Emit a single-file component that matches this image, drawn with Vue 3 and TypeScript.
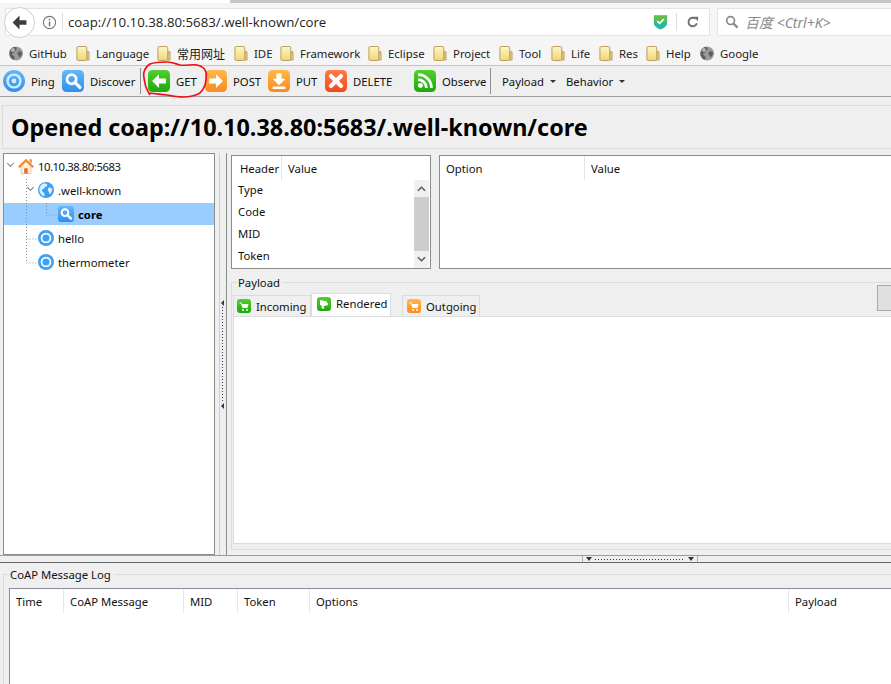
<script setup lang="ts">
const bookmarks = [
  { icon: 'world', label: 'GitHub', w: 38 },
  { icon: 'folder', label: 'Language', w: 52 },
  { icon: 'folder', label: '常用网址', w: 48, cjk: true },
  { icon: 'folder', label: 'IDE', w: 17 },
  { icon: 'folder', label: 'Framework', w: 59 },
  { icon: 'folder', label: 'Eclipse', w: 36 },
  { icon: 'folder', label: 'Project', w: 37 },
  { icon: 'folder', label: 'Tool', w: 23 },
  { icon: 'folder', label: 'Life', w: 19 },
  { icon: 'folder', label: 'Res', w: 18 },
  { icon: 'folder', label: 'Help', w: 25 },
  { icon: 'world', label: 'Google', w: 38 }
]

const logColumns = [
  { label: 'Time', w: 54 },
  { label: 'CoAP Message', w: 120 },
  { label: 'MID', w: 54 },
  { label: 'Token', w: 72 },
  { label: 'Options', w: 479 },
  { label: 'Payload', w: 120 }
]

const headerRows = ['Type', 'Code', 'MID', 'Token']
</script>

<template>
  <div class="page">
    <svg class="sprite" width="0" height="0">
      <defs>
        <linearGradient id="gBlue" x1="0" y1="0" x2="0" y2="1"><stop offset="0" stop-color="#63b8f7" /><stop offset="1" stop-color="#2f8fee" /></linearGradient>
        <linearGradient id="gGreen" x1="0" y1="0" x2="0" y2="1"><stop offset="0" stop-color="#4fd02c" /><stop offset="1" stop-color="#1fa80c" /></linearGradient>
        <linearGradient id="gOrange" x1="0" y1="0" x2="0" y2="1"><stop offset="0" stop-color="#ffb84a" /><stop offset="1" stop-color="#fb8a1e" /></linearGradient>
        <linearGradient id="gRed" x1="0" y1="0" x2="0" y2="1"><stop offset="0" stop-color="#ff7a45" /><stop offset="1" stop-color="#f5481c" /></linearGradient>
        <linearGradient id="gFolder" x1="0" y1="0" x2="0" y2="1"><stop offset="0" stop-color="#fdf6c4" /><stop offset="1" stop-color="#f0d678" /></linearGradient>
        <symbol id="ping" viewBox="0 0 24 24"><circle cx="12" cy="12" r="12" fill="url(#gBlue)" /><circle cx="12" cy="12" r="7" fill="none" stroke="#d4eaff" stroke-width="2.6" /><circle cx="12" cy="12" r="2.6" fill="#d4eaff" /></symbol>
        <symbol id="discover" viewBox="0 0 24 24"><rect width="24" height="24" rx="5" fill="url(#gBlue)" /><circle cx="10.5" cy="10" r="5" fill="none" stroke="#fff" stroke-width="3" /><path d="M14 13.5l5.5 5.5" stroke="#fff" stroke-width="3.6" stroke-linecap="round" /></symbol>
        <symbol id="get" viewBox="0 0 24 24"><rect width="24" height="24" rx="5" fill="url(#gGreen)" /><path d="M12 4.5L4.5 12l7.500 7.500v-4.700h7.500v-5.600h-7.500z" fill="#fff" /></symbol>
        <symbol id="post" viewBox="0 0 24 24"><rect width="24" height="24" rx="5" fill="url(#gOrange)" /><path d="M12 4.500l7.500 7.500-7.500 7.500v-4.700h-7.500v-5.600h7.500z" fill="#fff" /></symbol>
        <symbol id="put" viewBox="0 0 24 24"><rect width="24" height="24" rx="5" fill="url(#gOrange)" /><path d="M9.200 3.500h5.600v6h4.200l-7 7-7-7h4.200zM5 18h14v2.800H5z" fill="#fff" /></symbol>
        <symbol id="del" viewBox="0 0 24 24"><rect width="24" height="24" rx="5" fill="url(#gRed)" /><path d="M6.500 6.500l11 11M17.500 6.500l-11 11" stroke="#fff" stroke-width="4.400" stroke-linecap="round" /></symbol>
        <symbol id="rss" viewBox="0 0 24 24"><rect width="24" height="24" rx="5" fill="url(#gGreen)" /><circle cx="7" cy="17" r="2.700" fill="#fff" /><path d="M4.500 10.500a9 9 0 0 1 9 9M4.500 5a14.500 14.500 0 0 1 14.500 14.500" fill="none" stroke="#fff" stroke-width="3" /></symbol>
        <symbol id="home" viewBox="0 0 18 18"><path d="M3.500 9v8.500h11V9L9 4z" fill="#fff2e2" stroke="#f0b070" stroke-width=".8" /><path d="M7 17.500v-6h4v6z" fill="#f26a1e" /><path d="M0 9.500L9 .8l9 8.700-1.800 1.700L9 4.200 1.800 11.200z" fill="#f58a2a" /><path d="M13 1.500h2.500v5L13 4z" fill="#f58a2a" /></symbol>
        <symbol id="globe" viewBox="0 0 18 18"><circle cx="9" cy="9" r="9" fill="#3d9ff2" /><path d="M7 1.500c2 .5 4 1 3.500 2.500S8 5 7.500 6.500s-3 1-3 3 2.500 2 3 4-1 2.500-1.500 2.500C2 14 .8 9 2 6c1-2.500 3-4 5-4.500zM12 6.500c1.500-1 3.500 0 4 1.500s-1 3-1.500 4.500-2 1-2-.5-1.800-1.500-1.500-3 0-1.500 1-2.500z" fill="#dcefff" /></symbol>
        <symbol id="res" viewBox="0 0 18 18"><circle cx="9" cy="9" r="9" fill="#3ea2f2" /><circle cx="9" cy="9" r="6" fill="#fff" /><circle cx="9" cy="9" r="4" fill="#3ea2f2" /></symbol>
        <symbol id="folder" viewBox="0 0 14 16"><path d="M11 6h2.500v9H11z" fill="#e5cd80" stroke="#b59a55" stroke-width=".8" /><rect x=".5" y=".5" width="10.500" height="15" rx="1.500" fill="url(#gFolder)" stroke="#b59a55" /></symbol>
        <symbol id="world" viewBox="0 0 14 14"><circle cx="7" cy="7" r="7" fill="#9a9a9a" /><path d="M5 .6C7 1 8 1.500 7.500 3S6 4 5.500 5.500 3 6 3 7.500s2 1.500 2.500 3S5 13 4 13C1 11.500 0 8 1 5S3.500 1 5 .6zM9.500 5c1.200-.8 3 0 3.500 1.500s-1 2.500-1.500 3.500-1.800.8-1.800-.4-1.500-1.200-1.200-2.500.1-1.300 1-2.100z" fill="#5e5e5e" /><circle cx="4" cy="3.500" r="2" fill="#d8d8d8" opacity=".7" /></symbol>
        <symbol id="cartG" viewBox="0 0 14 14"><rect width="14" height="14" rx="3" fill="url(#gGreen)" /><path d="M2.500 3.500h2l.5 1.500h6.500l-1 4H5.500L4 4.500H2.500z" fill="#fff" /><circle cx="6" cy="11" r="1" fill="#fff" /><circle cx="10" cy="11" r="1" fill="#fff" /></symbol>
        <symbol id="cartO" viewBox="0 0 14 14"><rect width="14" height="14" rx="3" fill="url(#gOrange)" /><path d="M2.500 3.500h2l.5 1.500h6.500l-1 4H5.500L4 4.500H2.500z" fill="#fff" /><circle cx="6" cy="11" r="1" fill="#fff" /><circle cx="10" cy="11" r="1" fill="#fff" /></symbol>
        <symbol id="screen" viewBox="0 0 14 14"><rect width="14" height="14" rx="3" fill="url(#gGreen)" /><path d="M3 3l7 1.500v4L6.500 9l1 2.500H4.500l.3-2.700L3 8z" fill="#fff" /><path d="M10 5.500l1.500 1.500-1.500 1.500z" fill="#fff" /></symbol>
      </defs>
    </svg>

    <header class="browser">
      <div class="tabtop"><div class="tabfill"></div></div>
      <div class="address">
        <div class="urlbar">
          <svg class="info" viewBox="0 0 16 16"><circle cx="8" cy="8" r="6.500" fill="none" stroke="#777" stroke-width="1.200" /><path d="M7.200 4h1.600v1.600H7.200zM7.200 7h1.600v5H7.200z" fill="#777" /></svg>
          <span class="urlsep"></span>
          <span class="urltext">coap://10.10.38.80:5683/.well-known/core</span>
          <svg class="shield" viewBox="0 0 16 17"><path d="M1 1.500h14v8.500c0 2.500-3.500 5-7 6.500-3.500-1.500-7-4-7-6.500z" fill="#2db7a0" /><path d="M1 1.500h14v6.500H1z" fill="#62bd4f" /><path d="M4.500 7.500l2.500 2.500 4.500-4.500" fill="none" stroke="#fff" stroke-width="1.700" /></svg>
          <span class="urlsep"></span>
          <svg class="reload" viewBox="0 0 14 14"><path d="M11.500 8.500A5 5 0 1 1 10 3.200" fill="none" stroke="#6e6e6e" stroke-width="2.200" /><path d="M8 .8l5 .2-.2 5z" fill="#6e6e6e" /></svg>
        </div>
        <div class="search">
          <svg class="lens" viewBox="0 0 15 15"><circle cx="6" cy="6" r="4.200" fill="none" stroke="#8a8a8a" stroke-width="1.800" /><path d="M9.200 9.200l4.300 4.300" stroke="#8a8a8a" stroke-width="2.400" /></svg>
          <span class="placeholder">百度 &lt;Ctrl+K&gt;</span>
        </div>
        <button class="back">
          <svg viewBox="0 0 16 16"><path d="M8 1.500L1.500 8 8 14.500v-4.300h6.500V5.800H8z" fill="#3d3d3d" /></svg>
        </button>
      </div>
      <nav class="bookmarks">
        <div v-for="b in bookmarks" :key="b.label" class="bookmark" :class="{ cjk: b.cjk }">
          <svg class="bm-ico"><use :href="'#' + b.icon" /></svg>
          <span :style="{ width: b.w + 'px' }">{{ b.label }}</span>
        </div>
      </nav>
    </header>

    <div class="toolbar">
      <div class="tool t-ping"><svg class="tool-ico"><use href="#ping" /></svg><span>Ping</span></div>
      <div class="tool t-discover"><svg class="tool-ico"><use href="#discover" /></svg><span>Discover</span></div>
      <i class="tool-sep"></i>
      <div class="tool t-get"><svg class="tool-ico"><use href="#get" /></svg><span>GET</span></div>
      <div class="tool t-post"><svg class="tool-ico"><use href="#post" /></svg><span>POST</span></div>
      <div class="tool t-put"><svg class="tool-ico"><use href="#put" /></svg><span>PUT</span></div>
      <div class="tool t-del"><svg class="tool-ico"><use href="#del" /></svg><span>DELETE</span></div>
      <div class="tool t-obs"><svg class="tool-ico"><use href="#rss" /></svg><span>Observe</span></div>
      <i class="tool-sep"></i>
      <div class="menu m-payload">Payload<i class="caret"></i></div>
      <div class="menu m-behavior">Behavior<i class="caret"></i></div>
      <svg class="scribble" viewBox="0 0 70 42"><path d="M10 37C7 32 5 28 5 25 4 21 3 17 4 14 5 10 7 8 10 6 15 4 21 4 27 4 32 4 36 6 40 7 46 8 52 6 57 7 62 8 65 11 66 14 67 18 66 23 65 27 64 30 62 33 60 35 55 38 49 39 43 39 37 39 32 38 27 37 21 36 15 36 10 35" fill="none" stroke="#ec1018" stroke-width="1.700" /></svg>
    </div>

    <h1 class="title">Opened coap://10.10.38.80:5683/.well-known/core</h1>

    <main class="workspace">
      <aside class="tree">
        <svg class="tree-lines" width="100" height="130"><path d="M22.500 25v84M22.500 85h10M22.500 109h10M42.500 49v12M42.500 61h11" fill="none" stroke="#8c8c8c" stroke-dasharray="1 2" /></svg>
        <div class="node lvl0"><i class="chev"></i><svg class="node-ico"><use href="#home" /></svg><span class="host">10.10.38.80:5683</span></div>
        <div class="node lvl1"><i class="chev"></i><svg class="node-ico"><use href="#globe" /></svg><span>.well-known</span></div>
        <div class="node lvl2 selected"><svg class="node-ico"><use href="#discover" /></svg><span>core</span></div>
        <div class="node lvl1"><svg class="node-ico"><use href="#res" /></svg><span>hello</span></div>
        <div class="node lvl1"><svg class="node-ico"><use href="#res" /></svg><span>thermometer</span></div>
      </aside>

      <div class="vsplit">
        <i class="tri-left"></i>
        <i class="vdots"></i>
        <i class="tri-left"></i>
      </div>

      <section class="detail">
        <div class="tables">
          <div class="table header-table">
            <div class="thead">
              <span class="th th-header">Header</span>
              <span class="th">Value</span>
            </div>
            <div class="tbody">
              <div class="rows">
                <div v-for="r in headerRows" :key="r" class="row">{{ r }}</div>
              </div>
              <div class="scrollbar">
                <svg class="sb-arrow" viewBox="0 0 10 6"><path d="M1 5l4-4 4 4" fill="none" stroke="#555" stroke-width="1.500" /></svg>
                <div class="sb-thumb"></div>
                <svg class="sb-arrow" viewBox="0 0 10 6"><path d="M1 1l4 4 4-4" fill="none" stroke="#555" stroke-width="1.500" /></svg>
              </div>
            </div>
          </div>
          <div class="table option-table">
            <div class="thead">
              <span class="th th-option">Option</span>
              <span class="th">Value</span>
            </div>
          </div>
        </div>

        <fieldset class="payload">
          <legend>Payload</legend>
          <div class="tabs">
            <div class="tab"><svg class="tab-ico"><use href="#cartG" /></svg>Incoming</div>
            <div class="tab active"><svg class="tab-ico"><use href="#screen" /></svg>Rendered</div>
            <div class="tab outgoing"><svg class="tab-ico"><use href="#cartO" /></svg>Outgoing</div>
            <div class="tab-button"></div>
          </div>
          <div class="pane"></div>
        </fieldset>
      </section>
    </main>

    <div class="hsplit">
      <div class="handle">
        <i class="tri-down"></i>
        <i class="hdots"></i>
        <i class="tri-down"></i>
      </div>
    </div>

    <section class="bottom">
      <fieldset class="log">
        <legend>CoAP Message Log</legend>
        <div class="log-table">
          <div class="log-head">
            <span v-for="c in logColumns" :key="c.label" class="log-th" :style="{ width: c.w + 'px' }">{{ c.label }}</span>
          </div>
        </div>
      </fieldset>
    </section>
  </div>
</template>

<style>
html,
body {
  margin: 0;
  background: #efefef;
}
</style>

<style scoped>
.page {
  position: relative;
  width: 891px;
  height: 684px;
  overflow: hidden;
  background: #efefef;
  color: #111;
  font: 11.3px 'Noto Sans', 'Noto Sans CJK SC', sans-serif;
  display: flex;
  flex-direction: column;
}

.sprite {
  position: absolute;
}

.browser {
  background: #f5f5f5;
  height: 66px;
  flex: none;
  box-sizing: border-box;
  border-bottom: 1px solid #c4c4c4;
}

.tabtop {
  height: 3px;
  background: #fff;
  padding-left: 230px;
  margin-bottom: 5px;
}

.tabfill {
  height: 3px;
  background: #c6c6c6;
}

.address {
  position: relative;
  display: flex;
  height: 28px;
  padding-left: 5px;
  box-sizing: border-box;
}

.urlbar {
  width: 705px;
  box-sizing: border-box;
  background: #fff;
  border: 1px solid #e4e4e4;
  display: flex;
  align-items: center;
  padding-left: 36px;
}

.info {
  width: 15px;
  height: 15px;
  flex: none;
}

.urlsep {
  width: 1px;
  height: 18px;
  background: #ddd;
  flex: none;
  margin-left: 5px;
}

.urltext {
  margin-left: 5px;
  font: 13.250px 'Open Sans', sans-serif;
  color: #222;
  width: 575px;
  flex: none;
  white-space: nowrap;
}

.shield {
  width: 15px;
  height: 16px;
  flex: none;
  margin-right: 3px;
  margin-left: 10px;
}

.reload {
  width: 12px;
  height: 12px;
  margin-left: 10px;
  flex: none;
}

.search {
  flex: 1;
  margin-left: 7px;
  background: #fff;
  border: 1px solid #e4e4e4;
  border-right: 0;
  display: flex;
  align-items: center;
  padding-left: 7px;
}

.lens {
  width: 14px;
  height: 14px;
}

.placeholder {
  margin-left: 6px;
  color: #8a8a8a;
  font-style: italic;
  font-size: 14px;
  white-space: nowrap;
}

.back {
  position: absolute;
  left: 4px;
  top: -1px;
  width: 31px;
  height: 31px;
  padding: 0;
  border: 1px solid #cfcfcf;
  border-radius: 50%;
  background: #fff;
  display: flex;
  align-items: center;
  justify-content: center;
}

.back svg {
  width: 17px;
  height: 17px;
}

.bookmarks {
  display: flex;
  align-items: center;
  gap: 9px;
  height: 21px;
  margin-top: 7px;
  padding-left: 9px;
}

.bookmark {
  display: flex;
  align-items: center;
  gap: 6px;
  white-space: nowrap;
  font-size: 11.400px;
  color: #222;
}

.cjk {
  font-size: 12px;
}

.bm-ico {
  width: 14px;
  height: 15px;
  flex: none;
}

.toolbar {
  position: relative;
  display: flex;
  align-items: center;
  flex: none;
  height: 31px;
  box-sizing: border-box;
  border-bottom: 1px solid #a0a0a0;
  padding-left: 3px;
  background: #efefef;
}

.tool {
  display: flex;
  align-items: center;
  gap: 6px;
  white-space: nowrap;
}

.tool-ico {
  width: 22px;
  height: 22px;
  flex: none;
}

.t-ping {
  width: 59px;
}

.t-discover {
  width: 78px;
}

.tool-sep {
  width: 1px;
  height: 26px;
  background: #8f8f8f;
}

.t-get {
  margin-left: 7px;
  width: 57px;
}

.t-post {
  width: 63px;
}

.t-put {
  width: 57px;
}

.t-del {
  width: 89px;
}

.t-obs {
  width: 76px;
}

.menu {
  white-space: nowrap;
  display: flex;
  align-items: center;
}

.m-payload {
  margin-left: 11px;
  width: 64px;
}

.caret {
  width: 0;
  height: 0;
  border: 3px solid transparent;
  border-top-color: #333;
  border-bottom: 0;
  margin-left: 6px;
}

.scribble {
  position: absolute;
  left: 140px;
  top: -8px;
  width: 70px;
  height: 42px;
}

.title {
  flex: none;
  box-sizing: border-box;
  height: 44px;
  margin: 8px 0 4px 2px;
  padding-left: 8px;
  border: solid #dcdcdc;
  border-width: 1px 0 1px 1px;
  font-size: 23.400px;
  line-height: 42px;
  font-weight: 700;
  color: #000;
  white-space: nowrap;
}

.workspace {
  display: flex;
  flex: none;
  height: 402px;
  padding-left: 3px;
}

.tree {
  position: relative;
  width: 212px;
  box-sizing: border-box;
  flex: none;
  background: #fff;
  border: 1px solid #8c8c8c;
  padding-top: 1px;
}

.tree-lines {
  position: absolute;
  left: 0;
  top: 0;
  z-index: 1;
}

.node {
  position: relative;
  display: flex;
  align-items: center;
  height: 22px;
  margin-bottom: 2px;
  white-space: nowrap;
}

.lvl0 {
  padding-left: 14px;
}

.lvl1 {
  padding-left: 34px;
}

.lvl2 {
  padding-left: 54px;
}

.host {
  letter-spacing: -0.45px;
}

.chev {
  position: absolute;
  top: 6px;
  width: 4px;
  height: 4px;
  border: solid #808080;
  border-width: 0 1.5px 1.5px 0;
  transform: rotate(45deg);
  margin-left: -10px;
}

.node-ico {
  position: relative;
  z-index: 2;
  width: 16px;
  height: 16px;
  margin-right: 4px;
  flex: none;
}

.selected {
  background: #99ccff;
  font-weight: 700;
  color: #000;
}

.vsplit {
  position: relative;
  width: 12px;
  flex: none;
  box-sizing: border-box;
  border-right: 1px solid #8c8c8c;
  background: linear-gradient(90deg, #efefef 4px, #cfcfcf 4px, #cfcfcf 5px, #efefef 5px);
  display: flex;
  flex-direction: column;
  align-items: center;
  padding-top: 147px;
}

.tri-left {
  width: 0;
  height: 0;
  border: 3px solid transparent;
  border-right: 3px solid #33335a;
  border-left: 0;
  margin-left: 3px;
}

.vdots {
  width: 1px;
  height: 95px;
  margin: 1px 0 1px 3px;
  background: repeating-linear-gradient(180deg, #33335a 0 1px, transparent 1px 3px);
}

.detail {
  flex: 1;
  min-width: 0;
  padding: 2px 0 0 4px;
}

.tables {
  display: flex;
  gap: 8px;
  height: 114px;
}

.table {
  background: #fff;
  box-sizing: border-box;
  border: 1px solid #8c8c8c;
  flex: none;
}

.header-table {
  width: 200px;
}

.option-table {
  width: 500px;
}

.thead {
  display: flex;
  height: 24px;
  align-items: flex-start;
}

.th {
  padding-left: 6px;
  line-height: 26px;
  white-space: nowrap;
}

.th-header {
  width: 50px;
  height: 24px;
  box-sizing: border-box;
  padding-left: 8px;
  border-right: 1px solid #e6e6e6;
}

.th-option {
  width: 145px;
  height: 24px;
  box-sizing: border-box;
  border-right: 1px solid #e6e6e6;
}

.tbody {
  display: flex;
  height: 88px;
}

.rows {
  flex: 1;
  padding-left: 6px;
}

.row {
  height: 22px;
  line-height: 20px;
}

.scrollbar {
  width: 15px;
  background: #f0f0f0;
  display: flex;
  flex-direction: column;
  align-items: center;
  justify-content: space-between;
  margin-right: 1px;
}

.sb-arrow {
  width: 9px;
  height: 6px;
  margin: 6px 0;
}

.sb-thumb {
  width: 15px;
  flex: 1;
  background: #cdcdcd;
  margin: -1px 0;
}

.payload {
  margin: 5px 0 0;
  padding: 0;
  height: 276px;
  box-sizing: border-box;
  border: 1px solid #dcdcdc;
  border-right: 0;
  min-width: 0;
}

.payload legend {
  margin-left: 6px;
  padding: 0 2px 0 0;
  line-height: 16px;
}

.payload legend,
.log legend {
  position: relative;
  top: 1px;
}

.tabs {
  display: flex;
  align-items: flex-end;
  height: 35px;
  margin-top: -9px;
  padding-left: 1px;
  box-sizing: border-box;
}

.tab {
  box-sizing: border-box;
  display: flex;
  align-items: center;
  gap: 5px;
  height: 21px;
  padding-left: 3px;
  width: 78px;
  background: #efefef;
  border: 1px solid #dcdcdc;
  border-bottom: 0;
  white-space: nowrap;
}

.active {
  height: 23px;
  width: 80px;
  padding-left: 5px;
  padding-bottom: 3px;
  background: #fff;
}

.outgoing {
  margin-left: 11px;
  width: 78px;
  padding-left: 4px;
}

.tab-ico {
  width: 14px;
  height: 14px;
  flex: none;
}

.tab-button {
  margin-left: auto;
  width: 14px;
  height: 26px;
  box-sizing: border-box;
  background: #e0e0e0;
  border: 1px solid #aaa;
  border-right: 0;
  align-self: flex-start;
  margin-top: 4px;
}

.pane {
  height: 228px;
  margin: 0 0 0 1px;
  box-sizing: border-box;
  background: #fff;
  border: 1px solid #dcdcdc;
  border-right: 0;
}

.hsplit {
  flex: none;
  height: 8px;
  box-sizing: border-box;
  border-top: 1px solid #9c9c9c;
  border-bottom: 1px solid #666;
  padding-left: 582px;
}

.handle {
  width: 116px;
  height: 6px;
  box-sizing: border-box;
  border: solid #b0b0b0;
  border-width: 0 1px;
  display: flex;
  align-items: flex-start;
  justify-content: space-between;
  padding: 0 3px;
  gap: 3px;
}

.tri-down {
  width: 0;
  height: 0;
  border: 3px solid transparent;
  border-top: 4px solid #33335a;
  border-bottom: 0;
  margin-top: 1px;
}

.hdots {
  flex: 1;
  height: 1px;
  margin-top: 3px;
  background: repeating-linear-gradient(90deg, #33335a 0 1px, transparent 1px 3px);
}

.bottom {
  flex: 1;
  min-height: 0;
  padding: 3px 0 0 3px;
}

.log {
  margin: 0;
  padding: 6px 0 0 5px;
  height: 140px;
  box-sizing: border-box;
  border: 1px solid #dcdcdc;
  border-right: 0;
  min-width: 0;
}

.log legend {
  margin-left: 1px;
  padding: 0 3px 0 0;
  line-height: 16px;
}

.log-table {
  height: 120px;
  background: #fff;
  border: solid #8a8a9a;
  border-width: 1px 0 0 1px;
}

.log-head {
  display: flex;
  height: 24px;
}

.log-th {
  box-sizing: border-box;
  flex: none;
  padding-left: 6px;
  line-height: 26px;
  border-right: 1px solid #e6e6e6;
  white-space: nowrap;
}

.log-th:last-child {
  border-right: 0;
}
</style>
